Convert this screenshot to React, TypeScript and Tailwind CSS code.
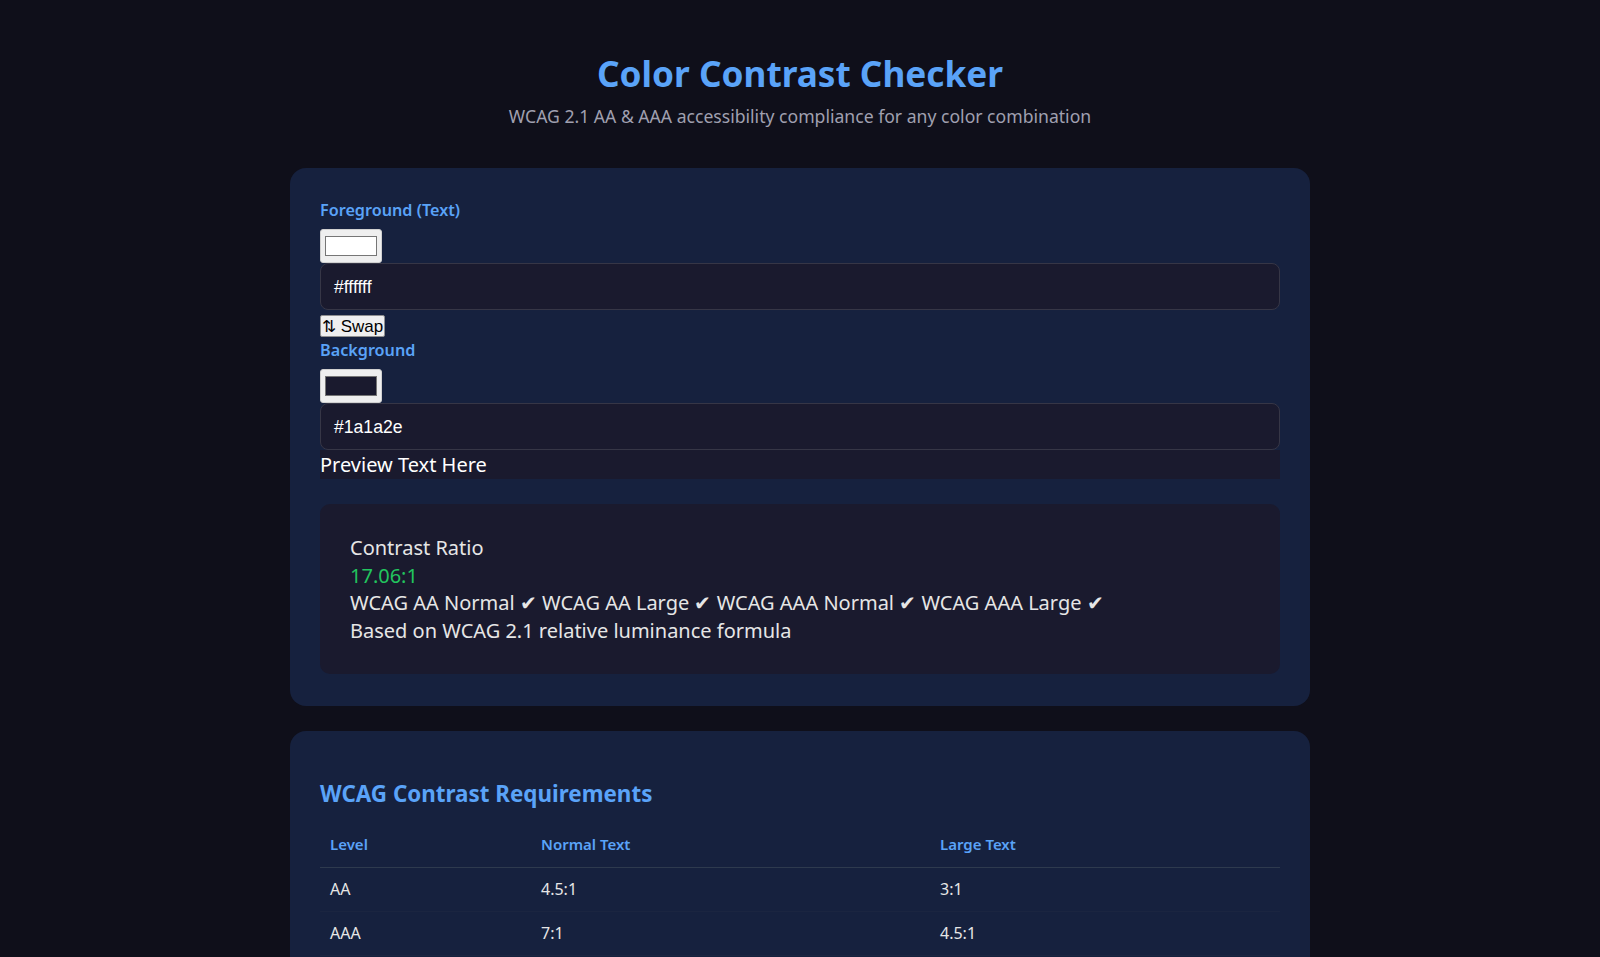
import React from "react";

function Swatch({ color }: { color: string }) {
  return (
    <div className="flex h-[34px] w-[62px] items-center justify-center rounded-[3px] border border-[#d0d0d0] bg-[#efefef] px-[4px] py-[6px]">
      <div className="h-full w-full border border-[#767676]" style={{ backgroundColor: color }} />
    </div>
  );
}

function HexInput({ value }: { value: string }) {
  return (
    <div className="flex h-[47px] w-full items-center rounded-[8px] border border-[#363646] bg-[#1a1a2e] px-[13px] pt-[2px] font-['Liberation_Sans',Arial,sans-serif] text-[17.6px] text-white">
      {value}
    </div>
  );
}

export default function App() {
  const rows = [
    { level: "AA", normal: "4.5:1", large: "3:1" },
    { level: "AAA", normal: "7:1", large: "4.5:1" },
  ];
  return (
    <div className="min-h-screen bg-[#0f0f1a] pb-10 font-['Noto_Sans','Open_Sans',sans-serif] text-[#e0e0e0]">
      <header className="pt-[52px] text-center">
        <h1 className="text-[35.2px] font-bold leading-[43px] text-[#5aa3f8]">Color Contrast Checker</h1>
        <p className="mt-[9px] text-[17.6px] leading-[24px] text-[#a0a0b0]">
          WCAG 2.1 AA &amp; AAA accessibility compliance for any color combination
        </p>
      </header>

      <section className="mx-auto mt-[40px] w-[1020px] rounded-[16px] bg-[#16213e] px-[30px] pt-[30px] pb-[32px]">
        <div className="mb-[7px] text-[16.2px] font-semibold leading-[24px] text-[#5aa3f8]">Foreground (Text)</div>
        <Swatch color="#ffffff" />
        <HexInput value="#ffffff" />
        <button className="mt-[5px] flex h-[22px] items-center rounded-[2px] border border-[#8f8f8f] bg-[#efefef] px-[1px] font-['Liberation_Sans',Arial,sans-serif] text-[17px] leading-none text-black">
          ⇅ Swap
        </button>
        <div className="mt-[1px] mb-[7px] text-[16.2px] font-semibold leading-[24px] text-[#5aa3f8]">Background</div>
        <Swatch color="#1a1a2e" />
        <HexInput value="#1a1a2e" />
        <div className="bg-[#1a1a2e] text-[20px] leading-[29px] text-white">Preview Text Here</div>

        <div className="mt-[25px] rounded-[10px] bg-[#1a1a2e] p-[30px] text-[20px] leading-[27.5px] text-[#e6e6e6]">
          <div>Contrast Ratio</div>
          <div className="text-[#22c55e]">17.06:1</div>
          <div>WCAG AA Normal ✔ WCAG AA Large ✔ WCAG AAA Normal ✔ WCAG AAA Large ✔</div>
          <div>Based on WCAG 2.1 relative luminance formula</div>
        </div>
      </section>

      <section className="mx-auto mt-[25px] w-[1020px] rounded-[16px] bg-[#16213e] px-[30px] pt-[49px] pb-[30px]">
        <h2 className="mb-[14px] text-[22.4px] font-bold leading-[27px] text-[#5aa3f8]">WCAG Contrast Requirements</h2>
        <table className="w-full border-collapse text-left">
          <thead>
            <tr className="border-b border-[#2e3a4e]">
              <th className="w-[211px] px-[10px] py-[12px] text-[15px] font-semibold leading-[22px] text-[#5aa3f8]">Level</th>
              <th className="w-[399px] px-[10px] py-[12px] text-[15px] font-semibold leading-[22px] text-[#5aa3f8]">Normal Text</th>
              <th className="px-[10px] py-[12px] text-[15px] font-semibold leading-[22px] text-[#5aa3f8]">Large Text</th>
            </tr>
          </thead>
          <tbody>
            {rows.map((r) => (
              <tr key={r.level} className="border-b border-[#1b2540]">
                <td className="px-[10px] py-[12px] text-[16px] leading-[19px] text-[#e6e6e6]">{r.level}</td>
                <td className="px-[10px] py-[12px] text-[16px] leading-[19px] text-[#e6e6e6]">{r.normal}</td>
                <td className="px-[10px] py-[12px] text-[16px] leading-[19px] text-[#e6e6e6]">{r.large}</td>
              </tr>
            ))}
          </tbody>
        </table>
      </section>
    </div>
  );
}
